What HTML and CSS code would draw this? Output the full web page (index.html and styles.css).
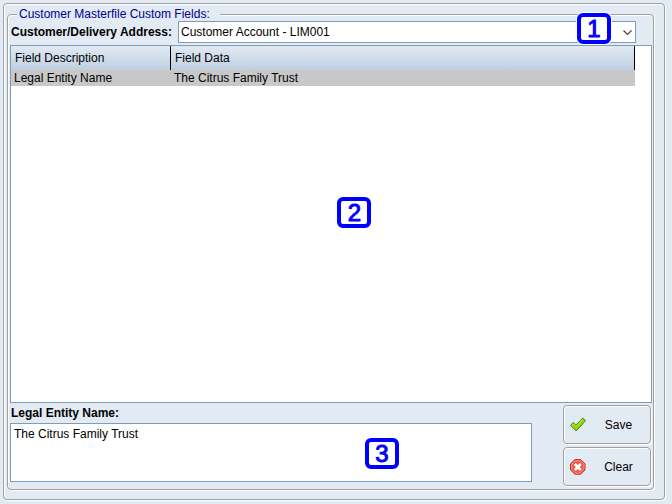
FILE: index.html
```html
<!DOCTYPE html>
<html lang="en">
  <head>
    <meta charset="UTF-8" />
    <meta name="viewport" content="width=device-width, initial-scale=1.0" />
    <title>Customer Masterfile Custom Fields</title>
    <link rel="stylesheet" href="styles.css">
  </head>
  <body>

    <form class="window">
      <fieldset class="fields">
        <legend>Customer Masterfile Custom Fields:</legend>

        <div class="content">
          <!-- account -->
          <div class="address-row">
            <label for="address">Customer/Delivery Address:</label>
            <div class="address-box">
              <select id="address">
                <option>Customer Account - LIM001</option>
              </select>
              <svg class="arrow" viewBox="0 0 9 6" width="9" height="6">
                <path d="M0.5 0.5 L4.5 4.5 L8.5 0.5" fill="none" stroke="#444" stroke-width="1.2" />
              </svg>
              <span class="badge badge1">1</span>
            </div>
          </div>

          <!-- custom fields -->
          <div class="table-box">
            <table>
              <thead>
                <tr>
                  <th class="col-name">Field Description</th>
                  <th>Field Data</th>
                </tr>
              </thead>
              <tbody>
                <tr>
                  <td>Legal Entity Name</td>
                  <td>The Citrus Family Trust</td>
                </tr>
              </tbody>
            </table>
            <span class="badge badge2">2</span>
          </div>

          <!-- edit the selected field -->
          <div class="edit-row">
            <div class="editor">
              <label for="value">Legal Entity Name:</label>
              <div class="value-box">
                <textarea id="value">The Citrus Family Trust</textarea>
                <span class="badge badge3">3</span>
              </div>
            </div>
            <div class="buttons">
              <button type="button" class="btn">
                <svg viewBox="0 0 16 16" width="16" height="16">
                  <path d="M0.6 8.4 L3.2 5.4 L6 8 L12.8 1 L15.6 3.6 L6.2 14 Z" fill="#8fd400" stroke="#4d8a10" stroke-linejoin="round" />
                  <path d="M2.2 8 L3.4 6.9 L6 9.6 L12.9 2.6" fill="none" stroke="#c3ee62" />
                </svg>
                <span>Save</span>
              </button>
              <button type="button" class="btn">
                <svg viewBox="0 0 16 16" width="16" height="16">
                  <path d="M5 0.6 H10.6 L15 4.8 V11 L10.6 15.2 H5 L0.6 11 V4.8 Z" fill="#ee5a4c" stroke="#c42b20" stroke-linejoin="round" />
                  <path d="M5.3 1.7 H10.4 L13.9 5.2 V10.6 L10.4 14.1 H5.3 L1.8 10.6 V5.2 Z" fill="none" stroke="#f79488" />
                  <path d="M4.8 5 L10.8 11 M10.8 5 L4.8 11" stroke="#fff" stroke-width="2.6" />
                </svg>
                <span>Clear</span>
              </button>
            </div>
          </div>
        </div>
      </fieldset>
    </form>

  </body>
</html>
```
FILE: styles.css
```css
*{
    padding: 0;
    margin: 0;
    box-sizing: border-box;
}
body{
    min-height: 100vh;
    display: flex;
    padding: 3px 7px 4px 3px;
    background-color: #e2eaf3;
    font-family: "Liberation Sans", Arial, sans-serif;
    font-size: 12px;
    line-height: 14px;
    color: #000;
}
select, textarea, button{
    font: inherit;
    color: inherit;
}

/* etched borders: grey line with a white one beside it */
.window, .fields, .btn{
    border: 1px solid #a0a0a0;
    border-radius: 4px;
    box-shadow: 1px 1px 0 #fff, inset 1px 1px 0 #fff;
}
.window{
    flex: 1;
    display: flex;
    padding: 3px 10px 9px 3px;
}
.fields{
    flex: 1;
    display: flex;
    min-width: 0;
}
legend{
    margin-left: 9px;
    padding: 0 10px 0 2px;
    background-color: #e2eaf3;
    color: #00008b;
}
.content{
    flex: 1;
    display: flex;
    flex-direction: column;
    height: 100%;
    padding: 0 1px 3px 2px;
}

.address-row{
    display: flex;
    align-items: center;
    padding: 0 16px 2px 1px;
}
label{
    font-weight: bold;
}
.address-row label{
    width: 167px;
}
.address-box{
    flex: 1;
    position: relative;
}
select{
    appearance: none;
    display: block;
    width: 100%;
    height: 22px;
    padding: 0 2px;
    border: 1px solid #7f9db9;
    background-color: #fff;
}
.arrow{
    position: absolute;
    right: 4px;
    top: 9px;
    pointer-events: none;
}

.table-box{
    flex: 1;
    position: relative;
    padding-right: 16px;
    border: 1px solid #7f9db9;
    background-color: #fff;
}
table{
    width: 100%;
    table-layout: fixed;
    border-collapse: separate;
    border-spacing: 0;
}
th{
    height: 24px;
    padding: 0 4px;
    border-right: 1px solid #000;
    background: linear-gradient(#e2eaf3, #bfcfe1);
    font-weight: normal;
    text-align: left;
}
.col-name{
    width: 160px;
}
td{
    height: 16px;
    padding: 0 3px;
    background-color: #c8c8c8;
}

.edit-row{
    display: flex;
    justify-content: space-between;
    padding-top: 2px;
}
.editor{
    flex: 1;
    display: flex;
    flex-direction: column;
    padding-top: 1px;
}
.editor label{
    padding-left: 1px;
    margin-bottom: 3px;
}
.value-box{
    position: relative;
    flex: 1;
    display: flex;
    margin-bottom: 4px;
}
textarea{
    flex: 1;
    padding: 3px;
    border: 1px solid #7f9db9;
    background-color: #fff;
    resize: none;
}
.buttons{
    display: flex;
    flex-direction: column;
    gap: 3px;
    width: 88px;
    margin: 0 1px 0 31px;
}
.btn{
    display: flex;
    align-items: center;
    height: 39px;
    padding: 0 6px;
    background-color: #e2eaf3;
}
.btn span{
    flex: 1;
    padding-left: 7px;
    text-align: center;
}

/* numbered markers */
.badge{
    position: absolute;
    width: 34px;
    height: 31px;
    border: 4px solid #0000ff;
    border-radius: 6px;
    background-color: #fff;
    color: #0000ff;
    font-size: 24px;
    line-height: 24px;
    text-align: center;
    -webkit-text-stroke: 1px #0000ff;
}
.badge1{
    right: 25px;
    top: -8px;
    box-shadow: 0 0 0 1px #fff;
}
.badge2{
    left: 51%;
    top: 42%;
    margin-top: 1px;
}
.badge3{
    left: 68%;
    top: 15px;
}
```
